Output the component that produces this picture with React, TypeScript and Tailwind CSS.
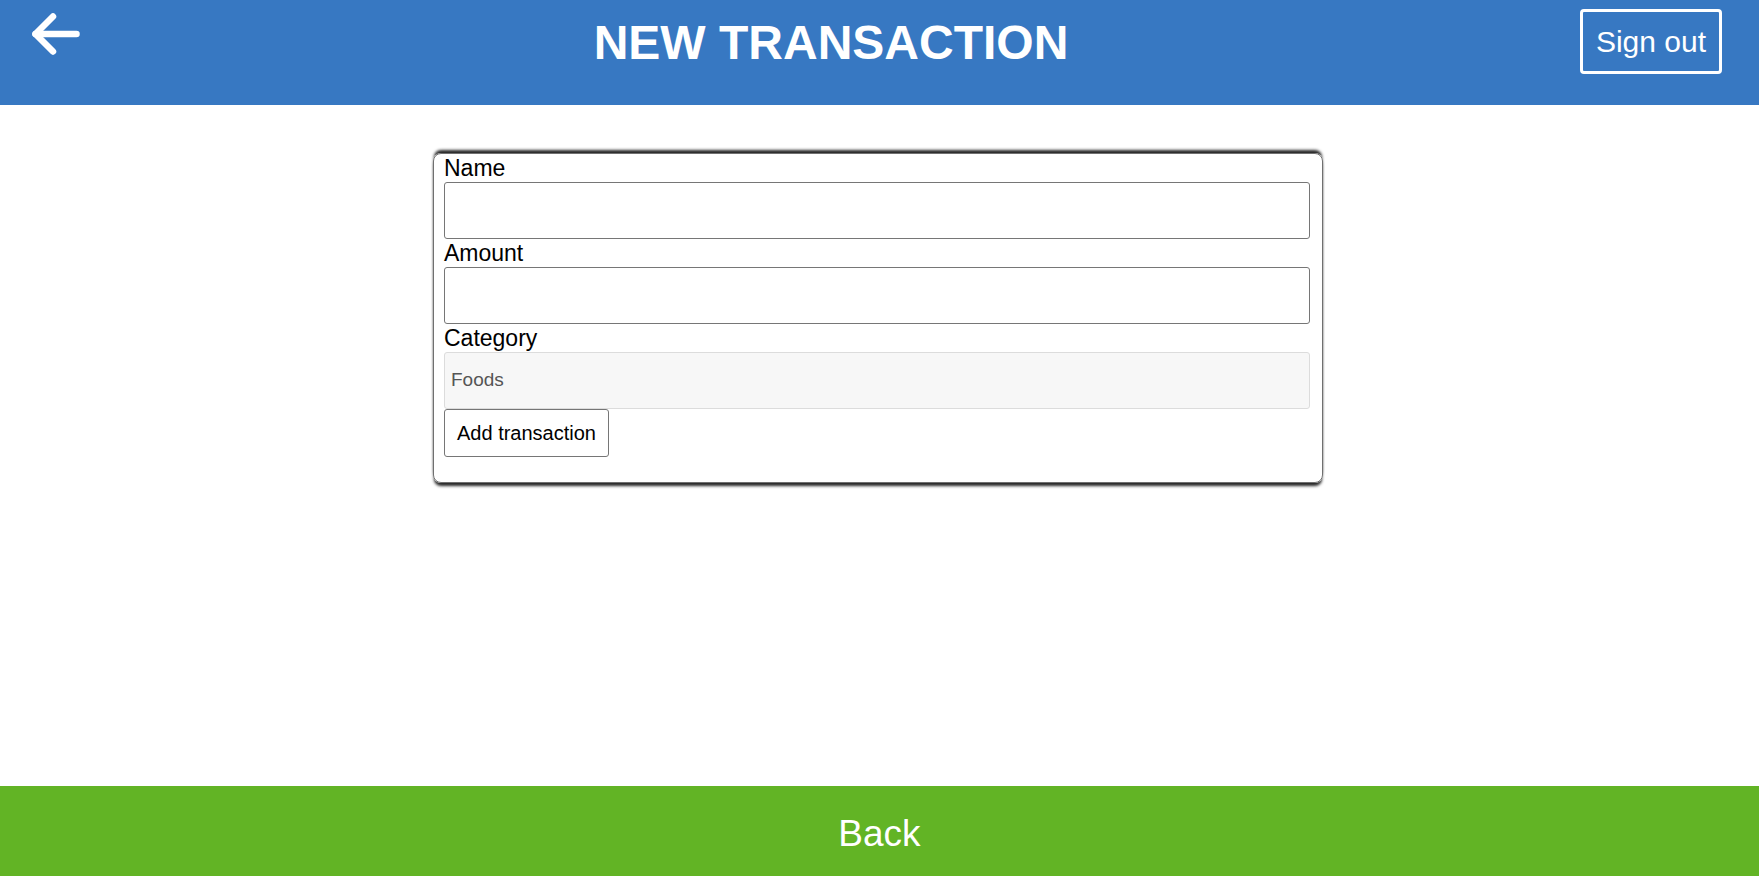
import React from "react";

export default function App() {
  return (
    <div className="h-screen w-full flex flex-col bg-white" style={{ fontFamily: '"Liberation Sans", Arial, sans-serif' }}>
      <header className="h-[105px] shrink-0 bg-[#3778c2] flex items-start justify-between pl-[30px] pr-[37px]">
        <button className="mt-[11px] block" aria-label="Back">
          <svg width="52" height="46" viewBox="0 0 52 46" fill="none" stroke="white" strokeWidth="6.5" strokeLinecap="round" strokeLinejoin="round">
            <line x1="5.5" y1="23" x2="46.5" y2="23" />
            <polyline points="23,5.5 5.5,23 23,40.5" />
          </svg>
        </button>
        <h1 className="mt-[15px] text-[48px] leading-[56px] font-bold text-white">NEW TRANSACTION</h1>
        <button className="mt-[9px] w-[142px] h-[65px] border-[3px] border-white rounded-[4px] flex items-center justify-center text-white text-[30px]">
          Sign out
        </button>
      </header>

      <main className="flex-1 pt-[48px] flex justify-center items-start pr-[3px]">
        <div className="w-[890px] border border-[#707070] rounded-[8px] pl-[10px] pr-[12px] pb-[25px] shadow-[0_4px_3px_-1px_rgba(0,0,0,0.85),0_-4px_3px_-1px_rgba(0,0,0,0.85)]">
          <label className="block h-[28px] leading-[28px] text-[23px] text-black">Name</label>
          <input className="block w-full h-[57px] border border-[#767676] rounded-[3px] bg-white outline-none" />
          <label className="block h-[28px] leading-[28px] text-[23px] text-black">Amount</label>
          <input className="block w-full h-[57px] border border-[#767676] rounded-[3px] bg-white outline-none" />
          <label className="block h-[28px] leading-[28px] text-[23px] text-black">Category</label>
          <div className="w-full h-[57px] border border-[#dcdcdc] rounded-[3px] bg-[#f7f7f7] flex items-center pl-[6px] text-[19px] text-[#555555]">
            Foods
          </div>
          <button className="block w-[165px] h-[48px] border border-[#767676] rounded-[3px] bg-white text-[20px] text-black">
            Add transaction
          </button>
        </div>
      </main>

      <footer className="h-[90px] shrink-0 bg-[#62b425] flex items-center justify-center pt-[5px] text-white text-[37px]">
        Back
      </footer>
    </div>
  );
}
